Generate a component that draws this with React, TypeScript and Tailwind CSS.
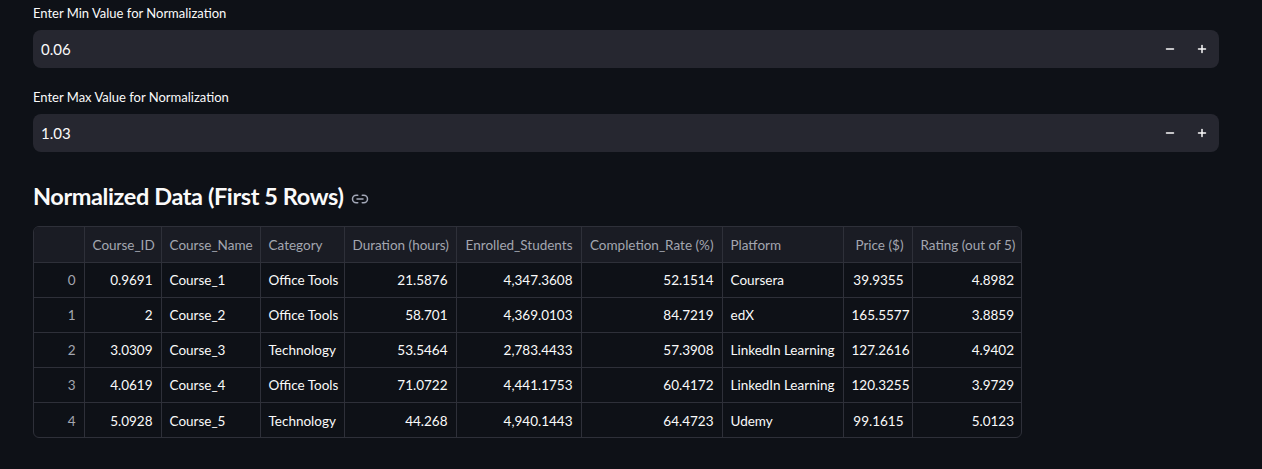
import { Minus, Plus, Link2 } from "lucide-react";

const columns = [
  { name: "", w: 50, num: true },
  { name: "Course_ID", w: 77, num: true },
  { name: "Course_Name", w: 99, num: false },
  { name: "Category", w: 84, num: false },
  { name: "Duration (hours)", w: 112, num: true },
  { name: "Enrolled_Students", w: 125, num: true },
  { name: "Completion_Rate (%)", w: 141, num: true },
  { name: "Platform", w: 121, num: false },
  { name: "Price ($)", w: 69, num: true },
  { name: "Rating (out of 5)", w: 110, num: true },
];

const rows = [
  ["0", "0.9691", "Course_1", "Office Tools", "21.5876", "4,347.3608", "52.1514", "Coursera", "39.9355", "4.8982"],
  ["1", "2", "Course_2", "Office Tools", "58.701", "4,369.0103", "84.7219", "edX", "165.5577", "3.8859"],
  ["2", "3.0309", "Course_3", "Technology", "53.5464", "2,783.4433", "57.3908", "LinkedIn Learning", "127.2616", "4.9402"],
  ["3", "4.0619", "Course_4", "Office Tools", "71.0722", "4,441.1753", "60.4172", "LinkedIn Learning", "120.3255", "3.9729"],
  ["4", "5.0928", "Course_5", "Technology", "44.268", "4,940.1443", "64.4723", "Udemy", "99.1615", "5.0123"],
];

function NumberInput({ label, value }: { label: string; value: string }) {
  return (
    <div className="flex flex-col">
      <label className="h-[30px] pt-[4px] text-[13px] text-[#fafafa]">{label}</label>
      <div className="flex h-[38px] items-center rounded-lg bg-[#262730] pl-2 pr-[1px]">
        <span className="flex-1 text-[15px] text-[#fafafa]">{value}</span>
        <button className="flex h-[32px] w-[32px] items-center justify-center text-[#fafafa]">
          <Minus size={12} strokeWidth={3} />
        </button>
        <button className="flex h-[32px] w-[32px] items-center justify-center text-[#fafafa]">
          <Plus size={12} strokeWidth={3} />
        </button>
      </div>
    </div>
  );
}

export default function App() {
  return (
    <div
      className="min-h-[469px] w-full bg-[#0e1117] px-[33px] pt-0 text-[#fafafa]"
      style={{ fontFamily: "Lato, 'Noto Sans', sans-serif" }}
    >
      <div className="w-[1186px]">
        <NumberInput label="Enter Min Value for Normalization" value="0.06" />
        <div className="h-[16px]" />
        <NumberInput label="Enter Max Value for Normalization" value="1.03" />
      </div>

      <div className="mt-[29px] flex h-[32px] items-center gap-2">
        <h3 className="text-[23.5px] font-bold tracking-[-0.4px] text-[#fafafa]">
          Normalized Data (First 5 Rows)
        </h3>
        <Link2 size={18} className="mt-[3px] text-[#a3a8b8]" />
      </div>

      <div className="mt-[13px] w-[989px] overflow-hidden rounded-md border border-[#2e3039]">
        <table className="w-[987px] table-fixed border-collapse text-[13.5px]">
          <colgroup>
            {columns.map((c, i) => (
              <col key={i} style={{ width: c.w }} />
            ))}
          </colgroup>
          <thead>
            <tr className="h-[35px] bg-[#1a1c24]">
              {columns.map((c, i) => (
                <th
                  key={i}
                  className={`border-l border-[#2e3039] px-2 pt-[2px] font-normal whitespace-nowrap overflow-hidden text-[#a3a6b0] first:border-l-0 ${
                    c.num ? "text-right" : "text-left"
                  }`}
                >
                  {c.name}
                </th>
              ))}
            </tr>
          </thead>
          <tbody>
            {rows.map((r, ri) => (
              <tr key={ri} className="h-[35px] border-t border-[#2e3039]">
                {r.map((v, ci) => (
                  <td
                    key={ci}
                    className={`border-l border-[#2e3039] px-2 pt-[2px] whitespace-nowrap overflow-hidden first:border-l-0 ${
                      columns[ci].num ? "text-right" : "text-left"
                    } ${ci === 0 ? "text-[#a3a6b0]" : "text-[#fafafa]"}`}
                  >
                    {v}
                  </td>
                ))}
              </tr>
            ))}
          </tbody>
        </table>
      </div>
    </div>
  );
}
